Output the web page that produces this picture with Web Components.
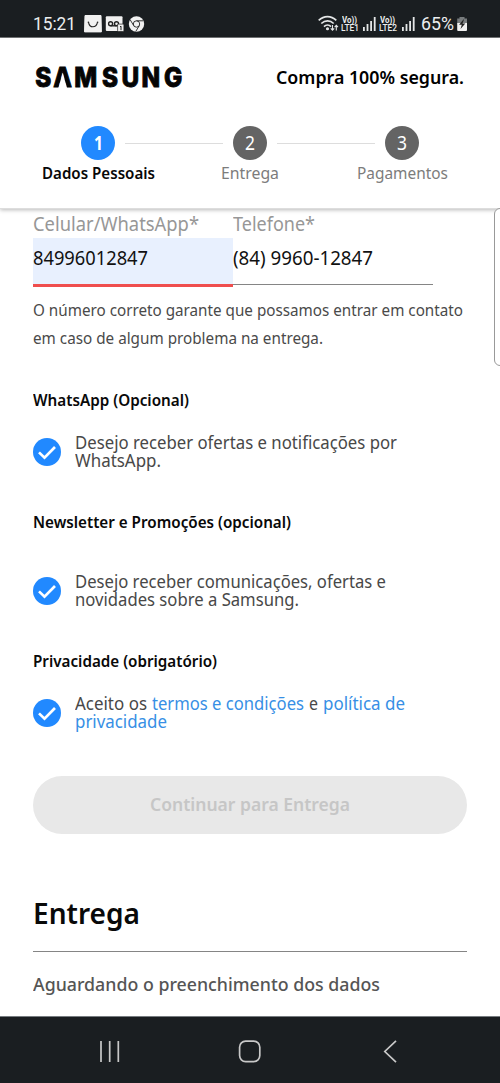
<!DOCTYPE html>
<html lang="pt-BR">
<head>
<meta charset="utf-8">
<title>Samsung - Compra</title>
<style>
html,body{margin:0;padding:0;background:#fff}
body{width:500px;height:1083px;overflow:hidden;font-family:"Noto Sans","Open Sans",sans-serif}
</style>
</head>
<body>
<checkout-app></checkout-app>
<script>
const define = (name, html, setup) => customElements.define(name, class extends HTMLElement {
  connectedCallback() {
    if (this.shadowRoot) return;
    const t = document.createElement('template');
    t.innerHTML = html;
    this.attachShadow({mode: 'open'}).append(t.content.cloneNode(true));
    if (setup) setup(this, this.shadowRoot);
  }
});

/* One line of text set to a given measure: w = width, s = size, h = line height, b = weight */
define('fit-line', `<style>
:host{display:block;flex:none;white-space:nowrap}
span{display:inline-block;transform-origin:0 50%;white-space:pre}
</style><span><slot></slot></span>`, (el, root) => {
  const g = k => el.getAttribute(k), span = root.querySelector('span');
  el.style.width = g('w') + 'px';
  el.style.fontSize = g('s') + 'px';
  el.style.lineHeight = el.style.height = g('h') + 'px';
  el.style.fontWeight = g('b') || 400;
  span.style.transform = `scaleX(${g('w') / span.getBoundingClientRect().width})`;
});

define('signal-bars', `<style>:host{display:block;width:13px;height:14px}svg{display:block}</style>
<svg width="13" height="14" fill="#e4e6e7"><rect x="0" y="10" width="1.8" height="4"/><rect x="3.6" y="7" width="1.8" height="7"/><rect x="7.2" y="4" width="1.8" height="10"/><rect x="10.8" y="0" width="1.8" height="14"/></svg>`);

define('volte-mark', `<style>:host{display:block;width:19px;font-family:Roboto,sans-serif;color:#eceeef}</style>
<fit-line w="15" s="8.5" h="8" b="700" style="margin-left:1px">Vo))</fit-line><fit-line w="18" s="9" h="8" b="500"><slot></slot></fit-line>`);

define('status-bar', `<style>
:host{display:flex;box-sizing:border-box;height:38px;background:#1a1e21;border-bottom:1px solid #777a7c;color:#eceeef;font-family:Roboto,sans-serif;padding:13px 33px 0;align-items:flex-start;justify-content:space-between}
div{display:flex;align-items:flex-start}svg{display:block}
</style>
<div><fit-line w="43" s="18.5" h="22">15:21</fit-line>
<svg width="70" height="22" viewBox="76 13 70 22"><path d="M85 15.5h16l.4 16.4H84.5z" fill="#f1f1f1" stroke="#f1f1f1" stroke-linejoin="round"/><path d="M88.5 22.3c1.2 6 7.5 6 9 0" fill="none" stroke="#222" stroke-width="1.1"/><circle cx="88.4" cy="22.2" r=".8" fill="#222"/><circle cx="97.6" cy="22.2" r=".8" fill="#222"/>
<rect x="105.8" y="16.3" width="16.7" height="14.6" rx="1" fill="#f1f1f1"/><g fill="none" stroke="#222" stroke-width="1.4"><circle cx="110.6" cy="23.7" r="2"/><circle cx="116.5" cy="23.7" r="2"/><path d="M110.6 25.8h6"/></g><rect x="117.6" y="24.1" width="6.3" height="7.4" rx="1" fill="#f1f1f1" stroke="#222" stroke-width=".7"/><path d="M120 26.8l1-.6v4" stroke="#222" fill="none"/>
<circle cx="136.5" cy="24" r="7.7" fill="#f1f1f1"/><g fill="none" stroke="#222" stroke-width=".9"><circle cx="136.5" cy="24" r="3.2"/><path d="M136.5 20.8h6.6M133.7 25.6l-3.5-5.8M139.3 25.6l-3.5 5.8"/></g></svg></div>
<div><svg width="23" height="22" viewBox="318 13 23 22" fill="none" stroke="#e4e6e7" stroke-width="1.7"><path d="M318.7 20.3c5.2-5 12.4-5 17.6 0M321.3 23.5c3.8-3.6 8.8-3.6 12.4 0M324 26.6c2-2 5-2 7 0"/><circle cx="327.5" cy="28.8" r=".7"/><path d="M332.5 25v5m-1.7-1.7l1.7 1.8 1.7-1.8M336.3 30.5v-5m-1.7 1.7l1.7-1.8 1.7 1.8" stroke-width="1.1"/></svg>
<volte-mark style="margin-top:3px">LTE1</volte-mark><signal-bars style="margin:4px 3px 0 3px"></signal-bars>
<volte-mark style="margin-top:3px">LTE2</volte-mark><signal-bars style="margin:4px 6px 0 4px"></signal-bars>
<fit-line w="33" s="18.5" h="22">65%</fit-line>
<svg width="13" height="22" viewBox="454 13 13 22"><path d="M459.5 17h5v1.6h2.5v5H457.2v-5h2.3z" fill="#777b7d"/><path d="M457.2 23h9.8v7q0 1-1 1h-7.8q-1 0-1-1z" fill="#f1f1f1"/><path d="M463.4 19.5l-4.3 5.2h2.7l-1.3 4.2 4.8-5.5h-2.8l1.5-3.9z" fill="#222"/></svg></div>`);

/* Wordmark; the white wedge opens the crossbar of the A */
define('brand-logo', `<style>:host{display:block;width:148px;height:24px}svg{display:block;overflow:visible}text{font:800 27px Inter,"Liberation Sans",sans-serif}</style>
<svg width="152" height="24" viewBox="35 66 152 24"><text transform="scale(.9 1)" y="87.6" x="39.1 59.2 82.5 113.3 134.9 157.2 182.3" fill="#050505" stroke="#050505" stroke-width=".9">SAMSUNG</text><path d="M62.7 73.5L58.4 89h8.6z" fill="#fff"/></svg>`);

define('step-item', `<style>
:host{display:flex;flex-direction:column;align-items:center;width:124px;margin:0 -45px;flex:none;color:#7c7c7c}
i{display:flex;align-items:center;justify-content:center;font-style:normal;width:34px;height:34px;border-radius:50%;background:#646464;color:#fff;margin-bottom:3px}
:host([active]){color:#080808}:host([active]) i{background:#2189ff}
</style><i><slot name="n"></slot></i><slot></slot>`);

define('site-header', `<style>
:host{display:block;box-sizing:border-box;height:171px;background:#fff;border-bottom:1px solid #ddd;box-shadow:0 1px 4px rgba(0,0,0,.28);position:relative;z-index:1}
.top{display:flex;justify-content:space-between;padding:27px 36px 0 35px}
.steps{display:flex;align-items:flex-start;padding:37px 81px 0}
hr{flex:1;height:1px;border:0;background:#ddd;margin:17px 10px 0}
</style>
<div class="top"><brand-logo></brand-logo><fit-line w="188" s="18" h="24" b="600">Compra 100% segura.</fit-line></div>
<div class="steps">
<step-item active><fit-line slot="n" w="9" s="19" h="28" b="700">1</fit-line><fit-line w="113" s="16" h="20" b="600">Dados Pessoais</fit-line></step-item><hr>
<step-item><fit-line slot="n" w="10" s="19" h="28">2</fit-line><fit-line w="58" s="16" h="20">Entrega</fit-line></step-item><hr>
<step-item><fit-line slot="n" w="10" s="19" h="28">3</fit-line><fit-line w="91" s="16" h="20">Pagamentos</fit-line></step-item>
</div>`);

define('phone-field', `<style>
:host{display:block;width:200px;color:#111}
.l{color:#979797;height:26px}
.v{box-sizing:border-box;height:47px;border-bottom:1px solid #858585;padding-top:6px}
:host([invalid]) .v{height:49px;background:#e8f0fe;border-bottom:3px solid #ef4e4e}
</style><div class="l"><slot name="label"></slot></div><div class="v"><slot></slot></div>`);

define('check-row', `<style>
:host{display:flex;align-items:center;gap:14px;height:36px;color:#484848}
svg{flex:none}div{margin-top:-2px}
</style><svg width="28" height="28"><circle cx="14" cy="14" r="14" fill="#2189ff"/><path d="M6 14.4l5.5 5.3L22 9" fill="none" stroke="#fff" stroke-width="2.7"/></svg><div><slot></slot></div>`);

define('pill-button', `<style>
:host{display:flex;height:58px;border-radius:29px;background:#e8e8e8;color:#c6c6c6;justify-content:center}
</style><slot></slot>`);

define('side-tab', `<style>:host{display:block;position:absolute;left:494px;top:208px;width:20px;height:156px;border:1px solid #999;border-radius:6px;background:#fff;z-index:2}</style>`);

define('nav-bar', `<style>
:host{display:block;box-sizing:border-box;height:67px;background:#1a1e21;border-top:1px solid #777c80}svg{display:block}
</style><svg width="500" height="66" viewBox="0 1017 500 66" fill="none" stroke="#c8c8c8" stroke-width="1.7"><path d="M101 1041v21M109.7 1041v21M118.3 1041v21"/><rect x="239.6" y="1041.2" width="20.2" height="20.4" rx="6"/><path d="M396 1040.8l-11.2 10.7 11.2 10.7"/></svg>`);

define('checkout-app', `<style>
:host{display:flex;flex-direction:column;width:500px;height:1083px;position:relative;background:#fff;overflow:hidden}
main{flex:1;padding:3px 33px 0;color:#090909}
.row{display:flex}.note{color:#4a4a4a;margin-top:9px}
.mix{display:flex;justify-content:space-between;width:330px}
.a{color:#378fe5}
</style>
<status-bar></status-bar><site-header></site-header>
<main>
<div class="row"><phone-field invalid><fit-line slot="label" w="166" s="19" h="24">Celular/WhatsApp*</fit-line><fit-line w="115" s="19" h="28">84996012847</fit-line></phone-field>
<phone-field><fit-line slot="label" w="82" s="19" h="24">Telefone*</fit-line><fit-line w="140" s="19" h="28">(84) 9960-12847</fit-line></phone-field></div>
<div class="note"><fit-line w="430" s="16" h="28">O número correto garante que possamos entrar em contato</fit-line><fit-line w="290" s="16" h="28">em caso de algum problema na entrega.</fit-line></div>
<fit-line style="margin-top:36px" w="156" s="16" h="24" b="600">WhatsApp (Opcional)</fit-line>
<check-row style="margin-top:22px"><fit-line w="322" s="17.5" h="18">Desejo receber ofertas e notificações por</fit-line><fit-line w="86" s="17.5" h="18">WhatsApp.</fit-line></check-row>
<fit-line style="margin-top:40px" w="258" s="16" h="24" b="600">Newsletter e Promoções (opcional)</fit-line>
<check-row style="margin-top:39px"><fit-line w="311" s="17.5" h="18">Desejo receber comunicações, ofertas e</fit-line><fit-line w="224" s="17.5" h="18">novidades sobre a Samsung.</fit-line></check-row>
<fit-line style="margin-top:40px" w="184" s="16" h="24" b="600">Privacidade (obrigatório)</fit-line>
<check-row style="margin-top:22px"><div class="mix"><fit-line w="72" s="17.5" h="18">Aceito os</fit-line><fit-line class="a" w="152" s="17.5" h="18">termos e condições</fit-line><fit-line w="9" s="17.5" h="18">e</fit-line><fit-line class="a" w="82" s="17.5" h="18">política de</fit-line></div><fit-line class="a" w="92" s="17.5" h="18">privacidade</fit-line></check-row>
<pill-button style="margin-top:45px"><fit-line w="200" s="18.5" h="56" b="600">Continuar para Entrega</fit-line></pill-button>
<fit-line style="margin-top:58px" w="107" s="29.5" h="42" b="600">Entrega</fit-line>
<div style="height:1px;background:#858585;margin-top:17px"></div>
<fit-line style="margin-top:18px;color:#555" w="347" s="18.5" h="28" b="550">Aguardando o preenchimento dos dados</fit-line>
</main>
<nav-bar></nav-bar><side-tab></side-tab>`);
</script>
</body>
</html>
